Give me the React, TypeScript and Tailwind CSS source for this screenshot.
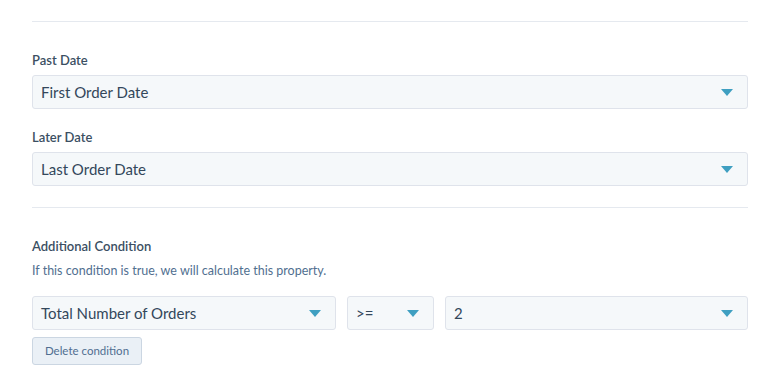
import React from "react";

const font = { fontFamily: "Lato, 'Noto Sans', sans-serif" };

function Caret() {
  return (
    <svg width="12" height="7" viewBox="0 0 12 7" className="shrink-0">
      <path d="M0 0 H12 L6 7 Z" fill="#3f9fc1" />
    </svg>
  );
}

function Select({ value, className = "" }: { value: string; className?: string }) {
  return (
    <div
      className={`flex h-[34px] items-center justify-between rounded-[3px] border border-[#dfe3eb] bg-[#f5f8fa] pl-[8px] pr-[14px] text-[15px] text-[#33475b] ${className}`}
    >
      <span>{value}</span>
      <Caret />
    </div>
  );
}

export default function App() {
  return (
    <div className="w-[767px] h-[372px] bg-white overflow-hidden" style={font}>
      <div className="px-[32px] pr-[19px] pt-[21px]">
        <div className="h-px bg-[#e5e9ef]" />
        <div className="mt-[30px] text-[13px] font-semibold text-[#3b4f63] leading-[16px]">Past Date</div>
        <Select value="First Order Date" className="mt-[7px]" />
        <div className="mt-[20px] text-[13px] font-semibold text-[#3b4f63] leading-[16px]">Later Date</div>
        <Select value="Last Order Date" className="mt-[7px]" />
        <div className="mt-[21px] h-px bg-[#e5e9ef]" />
        <div className="mt-[30px] text-[13px] font-semibold text-[#3b4f63] leading-[16px]">Additional Condition</div>
        <div className="mt-[9px] text-[12.5px] text-[#516f90] leading-[16px]">If this condition is true, we will calculate this property.</div>
        <div className="mt-[17px] flex gap-[11px]">
          <Select value="Total Number of Orders" className="w-[304px]" />
          <Select value=">=" className="w-[87px]" />
          <Select value="2" className="flex-1" />
        </div>
        <button className="mt-[7px] h-[28px] w-[110px] rounded-[3px] border border-[#cbd6e2] bg-[#eaf0f6] text-[11.5px] text-[#506e91]">
          Delete condition
        </button>
      </div>
    </div>
  );
}
